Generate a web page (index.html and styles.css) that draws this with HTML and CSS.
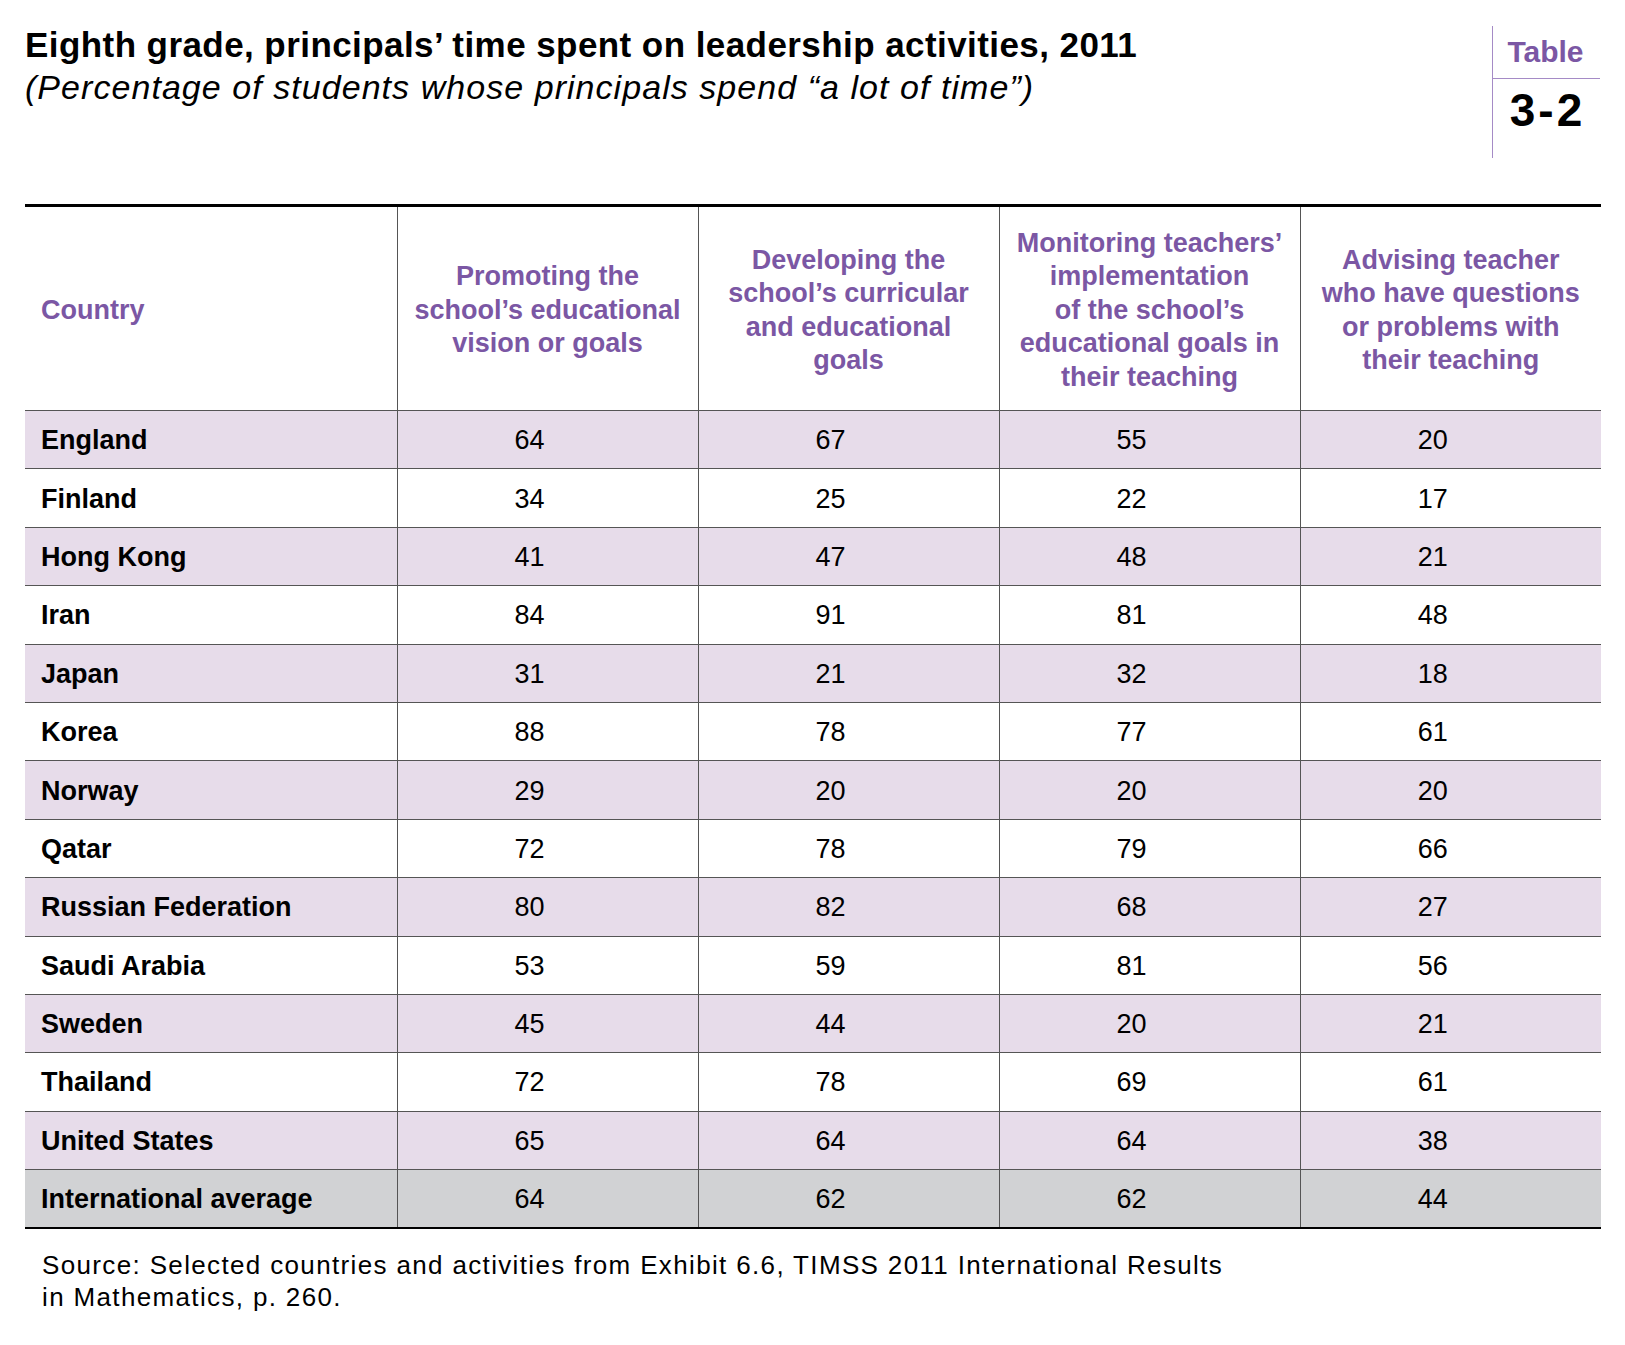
FILE: index.html
```html
<!DOCTYPE html>
<html lang="en">
<head>
<meta charset="utf-8">
<title>Table 3-2</title>
<link rel="stylesheet" href="styles.css">
</head>
<body>
<div class="page">
  <header class="top">
    <div class="titles">
      <h1 class="title">Eighth grade, principals’ time spent on leadership activities, 2011</h1>
      <p class="subtitle">(Percentage of students whose principals spend “a lot of time”)</p>
    </div>
    <div class="badge">
      <div class="badge-label">Table</div>
      <div class="badge-num">3-2</div>
    </div>
  </header>

  <table class="data">
    <colgroup>
      <col class="c-country">
      <col class="c-val">
      <col class="c-val">
      <col class="c-val">
      <col class="c-val">
    </colgroup>
    <thead>
      <tr>
        <th class="h-country">Country</th>
        <th>Promoting the<br>school’s educational<br>vision or goals</th>
        <th>Developing the<br>school’s curricular<br>and educational<br>goals</th>
        <th>Monitoring teachers’<br>implementation<br>of the school’s<br>educational goals in<br>their teaching</th>
        <th>Advising teacher<br>who have questions<br>or problems with<br>their teaching</th>
      </tr>
    </thead>
    <tbody>
      <tr class="alt"><td>England</td><td>64</td><td>67</td><td>55</td><td>20</td></tr>
      <tr><td>Finland</td><td>34</td><td>25</td><td>22</td><td>17</td></tr>
      <tr class="alt"><td>Hong Kong</td><td>41</td><td>47</td><td>48</td><td>21</td></tr>
      <tr><td>Iran</td><td>84</td><td>91</td><td>81</td><td>48</td></tr>
      <tr class="alt"><td>Japan</td><td>31</td><td>21</td><td>32</td><td>18</td></tr>
      <tr><td>Korea</td><td>88</td><td>78</td><td>77</td><td>61</td></tr>
      <tr class="alt"><td>Norway</td><td>29</td><td>20</td><td>20</td><td>20</td></tr>
      <tr><td>Qatar</td><td>72</td><td>78</td><td>79</td><td>66</td></tr>
      <tr class="alt"><td>Russian Federation</td><td>80</td><td>82</td><td>68</td><td>27</td></tr>
      <tr><td>Saudi Arabia</td><td>53</td><td>59</td><td>81</td><td>56</td></tr>
      <tr class="alt"><td>Sweden</td><td>45</td><td>44</td><td>20</td><td>21</td></tr>
      <tr><td>Thailand</td><td>72</td><td>78</td><td>69</td><td>61</td></tr>
      <tr class="alt"><td>United States</td><td>65</td><td>64</td><td>64</td><td>38</td></tr>
      <tr class="avg"><td>International average</td><td>64</td><td>62</td><td>62</td><td>44</td></tr>
    </tbody>
  </table>

  <p class="source">Source: Selected countries and activities from Exhibit 6.6, TIMSS 2011 International Results<br>in Mathematics, p. 260.</p>
</div>
</body>
</html>
```

FILE: styles.css
```css
html, body {
  margin: 0;
  padding: 0;
  background: #ffffff;
}

.page {
  width: 1625px;
  box-sizing: border-box;
  padding: 0 25px 0 25px;
  font-family: "Liberation Sans", Arial, sans-serif;
  color: #000;
}

.top {
  display: flex;
  justify-content: space-between;
  align-items: flex-start;
  height: 204px;
}

.titles {
  padding-top: 24px;
}

.title {
  margin: 0;
  font-size: 35px;
  line-height: 42px;
  font-weight: bold;
  letter-spacing: 0.43px;
}

.subtitle {
  margin: 0;
  font-size: 34px;
  line-height: 42px;
  font-style: italic;
  font-weight: normal;
  letter-spacing: 1.05px;
}

.badge {
  margin-top: 26px;
  width: 108px;
  height: 132px;
  box-sizing: border-box;
  border-left: 1.5px solid #a58bc6;
  display: flex;
  flex-direction: column;
}

.badge-label {
  height: 52px;
  border-bottom: 1.5px solid #a58bc6;
  color: #7b57a4;
  font-weight: bold;
  font-size: 30px;
  line-height: 52px;
  text-align: center;
  padding-right: 2px;
}

.badge-num {
  font-weight: bold;
  font-size: 46px;
  line-height: 62px;
  letter-spacing: 3px;
  text-align: center;
  padding-left: 2px;
}

.data {
  width: 1575px;
  border-collapse: collapse;
  table-layout: fixed;
  border-top: 3px solid #000;
  border-bottom: 2px solid #000;
}

.c-country { width: 372px; }
.c-val { width: 301px; }

.data th {
  height: 199px;
  padding: 4px 0 0 0;
  color: #7b57a4;
  font-weight: bold;
  font-size: 27px;
  line-height: 33.5px;
  text-align: center;
  vertical-align: middle;
  border-left: 1.5px solid #555;
  border-bottom: 1.5px solid #555;
}

.data th.h-country {
  text-align: left;
  padding-left: 16px;
  border-left: none;
}

.data td {
  height: 58.4px;
  padding: 2px 36px 0 0;
  box-sizing: border-box;
  font-size: 27px;
  text-align: center;
  vertical-align: middle;
  border-left: 1.5px solid #555;
  border-bottom: 1.5px solid #555;
}

.data td:first-child {
  text-align: left;
  padding: 2px 0 0 16px;
  font-weight: bold;
  border-left: none;
}

.data tr.alt td {
  background: #e7dcea;
}

.data tr.avg td {
  background: #d1d2d4;
  border-bottom: 2px solid #000;
}

.source {
  margin: 20px 0 0 17px;
  font-size: 26px;
  line-height: 32px;
  letter-spacing: 1.35px;
}
```
